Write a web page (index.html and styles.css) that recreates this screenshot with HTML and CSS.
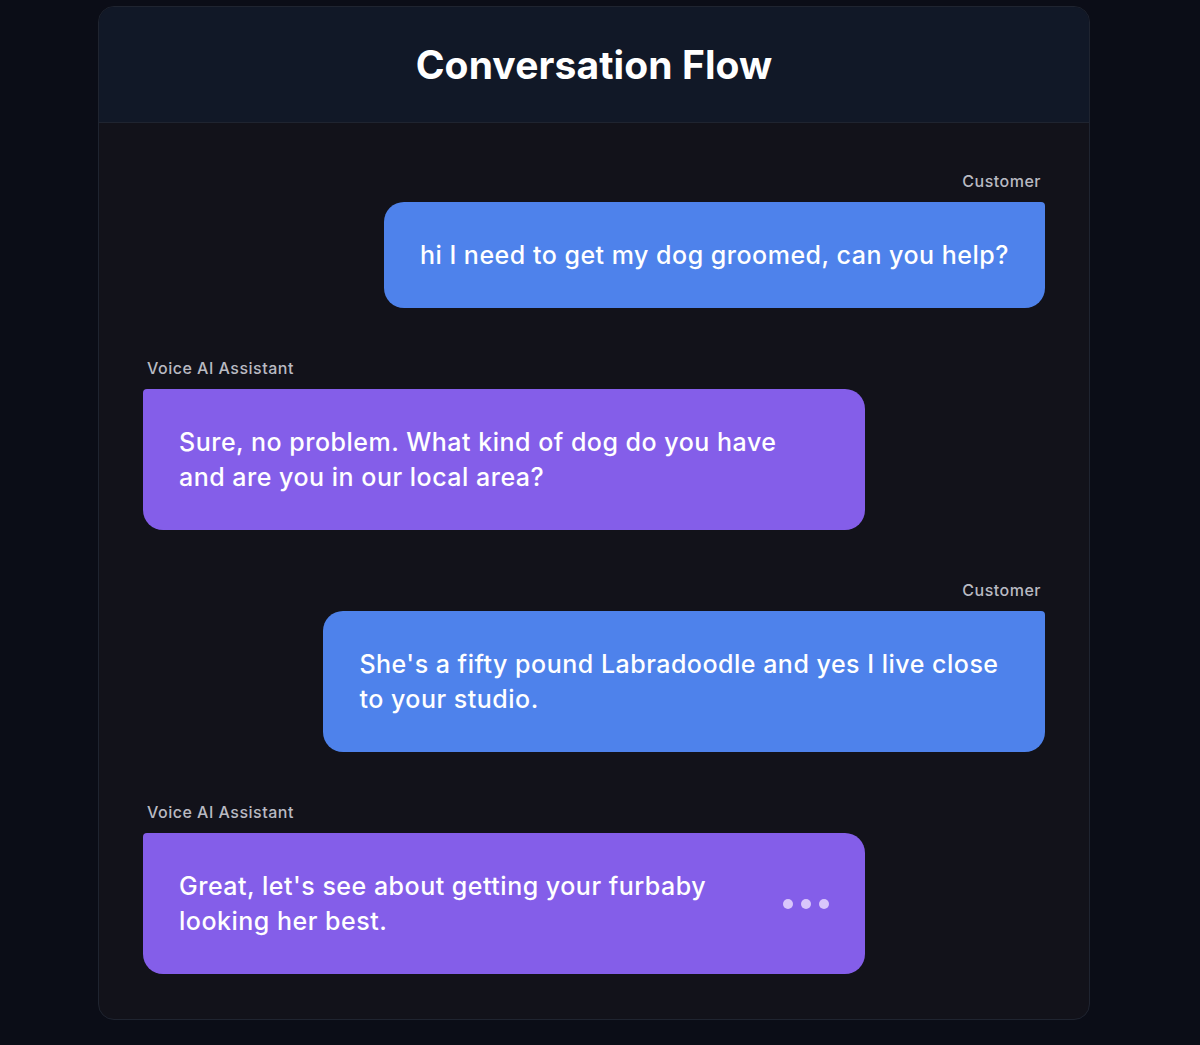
FILE: index.html
```html
<!DOCTYPE html>
<html lang="en">
<head>
<meta charset="utf-8">
<title>Conversation Flow</title>
<link rel="stylesheet" href="styles.css">
</head>
<body>
<div class="card">
  <header class="card-header">
    <h1 class="title">Conversation Flow</h1>
  </header>
  <div class="chat">
    <div class="msg msg-customer">
      <div class="label">Customer</div>
      <div class="bubble bubble-customer">hi I need to get my dog groomed, can you help?</div>
    </div>
    <div class="msg msg-assistant">
      <div class="label">Voice AI Assistant</div>
      <div class="bubble bubble-assistant">Sure, no problem. What kind of dog do you have and are you in our local area?</div>
    </div>
    <div class="msg msg-customer">
      <div class="label">Customer</div>
      <div class="bubble bubble-customer">She's a fifty pound Labradoodle and yes I live close to your studio.</div>
    </div>
    <div class="msg msg-assistant">
      <div class="label">Voice AI Assistant</div>
      <div class="bubble bubble-assistant bubble-typing">
        <span class="bubble-text">Great, let's see about getting your furbaby looking her best.</span>
        <span class="dots"><i class="dot"></i><i class="dot"></i><i class="dot"></i></span>
      </div>
    </div>
  </div>
</div>
</body>
</html>
```

FILE: styles.css
```css
* { box-sizing: border-box; }
html, body { margin: 0; padding: 0; }
body {
  background: #0b0d17;
  font-family: Inter, "Noto Sans", "Liberation Sans", sans-serif;
  color: #fff;
  padding: 6px 110px 27px 98px;
}
.card {
  width: 992px;
  border: 1px solid #1f2430;
  border-radius: 16px;
  background: #12121a;
  overflow: hidden;
}
.card-header {
  background: #111827;
  border-bottom: 1px solid #1f2430;
  height: 116px;
  display: flex;
  align-items: center;
  justify-content: center;
}
.title {
  margin: 0;
  font-size: 39px;
  font-weight: 700;
  letter-spacing: 0.1px;
  color: #ffffff;
}
.chat {
  padding: 48px 44px 45px 44px;
  display: flex;
  flex-direction: column;
  gap: 50px;
}
.msg {
  display: flex;
  flex-direction: column;
}
.msg-customer { align-items: flex-end; }
.msg-assistant { align-items: flex-start; }
.label {
  font-size: 16px;
  font-weight: 500;
  line-height: 20px;
  letter-spacing: 0.5px;
  color: #b9bac2;
  margin-bottom: 11px;
  padding: 0 4px;
}
.bubble {
  max-width: 80%;
  font-size: 25px;
  font-weight: 500;
  line-height: 35px;
  letter-spacing: 0.5px;
  padding: 36px 36px 35px 36px;
  color: #ffffff;
}
.bubble-customer {
  background: #4e82eb;
  border-radius: 20px 4px 20px 20px;
}
.bubble-assistant {
  background: #845ee9;
  border-radius: 4px 20px 20px 20px;
  width: 80%;
}
.bubble-typing {
  display: flex;
  align-items: center;
  gap: 64px;
}
.bubble-text { flex: 1; }
.dots {
  display: flex;
  gap: 8px;
  flex-shrink: 0;
}
.dot {
  display: block;
  width: 10px;
  height: 10px;
  border-radius: 50%;
  background: #d9c6fb;
}
```
